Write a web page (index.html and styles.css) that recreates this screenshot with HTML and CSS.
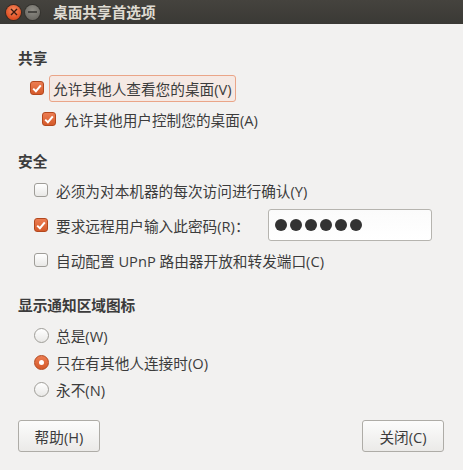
FILE: index.html
```html
<!DOCTYPE html>
<html lang="zh-CN">
<head>
    <meta charset="UTF-8">
    <title>桌面共享首选项</title>
    <link rel="stylesheet" href="styles.css">
</head>
<body>
    <div class="window">
        <div class="titlebar">
            <span class="wbtn close">
                <svg width="8" height="8" viewBox="0 0 8 8"><path d="M1 1L7 7M7 1L1 7" stroke="#3a1a10" stroke-width="1.4"/></svg>
            </span>
            <span class="wbtn minimize">
                <svg width="9" height="2" viewBox="0 0 9 2"><path d="M0 1H9" stroke="#2e2d2a" stroke-width="1.4"/></svg>
            </span>
            <span class="title">桌面共享首选项</span>
        </div>

        <div class="content">
            <h3 class="header">共享</h3>
            <div class="group group-share">
                <label class="row row-first">
                    <span class="check on"><svg width="10" height="9" viewBox="0 0 10 9"><path d="M1.2 4.6L3.9 7.2L8.8 1.4" fill="none" stroke="#fff" stroke-width="2"/></svg></span>
                    <span class="focus">允许其他人查看您的桌面(V)</span>
                </label>
                <label class="row row-sub">
                    <span class="check on"><svg width="10" height="9" viewBox="0 0 10 9"><path d="M1.2 4.6L3.9 7.2L8.8 1.4" fill="none" stroke="#fff" stroke-width="2"/></svg></span>
                    <span>允许其他用户控制您的桌面(A)</span>
                </label>
            </div>

            <h3 class="header">安全</h3>
            <div class="group group-security">
                <label class="row">
                    <span class="check"></span>
                    <span>必须为对本机器的每次访问进行确认(Y)</span>
                </label>
                <div class="row row-entry">
                    <label class="row-label">
                        <span class="check on"><svg width="10" height="9" viewBox="0 0 10 9"><path d="M1.2 4.6L3.9 7.2L8.8 1.4" fill="none" stroke="#fff" stroke-width="2"/></svg></span>
                        <span>要求远程用户输入此密码(R)：</span>
                    </label>
                    <div class="entry">
                        <span class="dot"></span><span class="dot"></span><span class="dot"></span><span class="dot"></span><span class="dot"></span><span class="dot"></span>
                    </div>
                </div>
                <label class="row">
                    <span class="check"></span>
                    <span>自动配置 UPnP 路由器开放和转发端口(C)</span>
                </label>
            </div>

            <h3 class="header">显示通知区域图标</h3>
            <div class="group group-radio">
                <label class="row">
                    <span class="radio"></span>
                    <span>总是(W)</span>
                </label>
                <label class="row">
                    <span class="radio on"></span>
                    <span>只在有其他人连接时(O)</span>
                </label>
                <label class="row">
                    <span class="radio"></span>
                    <span>永不(N)</span>
                </label>
            </div>

            <div class="buttons">
                <button class="btn">帮助(H)</button>
                <button class="btn">关闭(C)</button>
            </div>
        </div>
    </div>
</body>
</html>
```

FILE: styles.css
```css
body {
    margin: 0;
    padding: 0;
    background: #f2f1f0;
    font-family: "Open Sans", "Noto Sans CJK SC", sans-serif;
    font-size: 14.67px;
    color: #3c3c3c;
}

.window {
    width: 463px;
    height: 470px;
    display: flex;
    flex-direction: column;
}

/* Title bar */
.titlebar {
    height: 24px;
    display: flex;
    align-items: center;
    padding-left: 6px;
    background: linear-gradient(to bottom, #45433e, #3a3935);
}

.wbtn {
    width: 15px;
    height: 15px;
    border-radius: 50%;
    display: flex;
    align-items: center;
    justify-content: center;
    margin-right: 4px;
}

.close {
    background: radial-gradient(circle at 50% 35%, #f58a5e, #df4e22 70%);
    box-shadow: 0 0 0 1px #3a2a22;
}

.minimize {
    background: radial-gradient(circle at 50% 35%, #8f8d86, #6f6d67 70%);
    box-shadow: 0 0 0 1px #34332f;
}

.title {
    margin-left: 9px;
    color: #dfdbd2;
    font-weight: bold;
    font-size: 14.67px;
    line-height: 20px;
}

/* Content */
.content {
    flex: 1;
    padding: 24px 19px 0 18px;
    display: flex;
    flex-direction: column;
}

.header {
    margin: 0;
    font-size: 14.67px;
    font-weight: bold;
    line-height: 20px;
    color: #3c3c3c;
}

.group {
    display: flex;
    flex-direction: column;
    padding-left: 16px;
}

.group-share {
    margin: 7px 0 19px;
    gap: 5px;
}

.group-security {
    margin: 6px 0 22px;
    gap: 6px;
}

.group-radio {
    margin: 7px 0 18px;
    gap: 1px;
}

.row {
    height: 26px;
    display: flex;
    align-items: center;
}

.row-first {
    margin-left: -4px;
}

.row-sub {
    margin-left: 8px;
}

.row-entry {
    height: 32px;
    gap: 18px;
}

.row-label {
    display: flex;
    align-items: center;
}

.focus {
    margin-left: -3px;
    padding: 2px 3px;
    border: 1px solid #eaa588;
    border-radius: 3px;
    background: #f5e9e4;
}

/* Check boxes and radio buttons */
.check,
.radio {
    width: 12px;
    height: 12px;
    flex-shrink: 0;
    margin-right: 8px;
    border: 1px solid #9f9d98;
    background: linear-gradient(to bottom, #ffffff, #e9e8e6);
    display: flex;
    align-items: center;
    justify-content: center;
}

.check {
    border-radius: 3px;
}

.radio {
    width: 13px;
    height: 13px;
    margin-right: 7px;
    border-radius: 50%;
}

.check.on,
.radio.on {
    border-color: #b3481e;
    background: linear-gradient(to bottom, #ec7d52, #d55a2a);
}

.radio.on::after {
    content: "";
    width: 5px;
    height: 5px;
    border-radius: 50%;
    background: #fff;
}

/* Password entry */
.entry {
    width: 156px;
    height: 30px;
    border: 1px solid #b6b4af;
    border-radius: 3px;
    background: linear-gradient(to bottom, #fbfbfb, #ffffff);
    display: flex;
    align-items: center;
    padding-left: 6px;
    gap: 3px;
}

.dot {
    width: 12px;
    height: 12px;
    border-radius: 50%;
    background: #333333;
}

/* Dialog buttons */
.buttons {
    display: flex;
    justify-content: space-between;
}

.btn {
    width: 82px;
    height: 32px;
    font-family: inherit;
    font-size: 14.67px;
    color: #3c3c3c;
    border: 1px solid #aeaca7;
    border-radius: 3px;
    background: linear-gradient(to bottom, #fcfcfc, #ebeae8);
    padding: 0;
}
```
